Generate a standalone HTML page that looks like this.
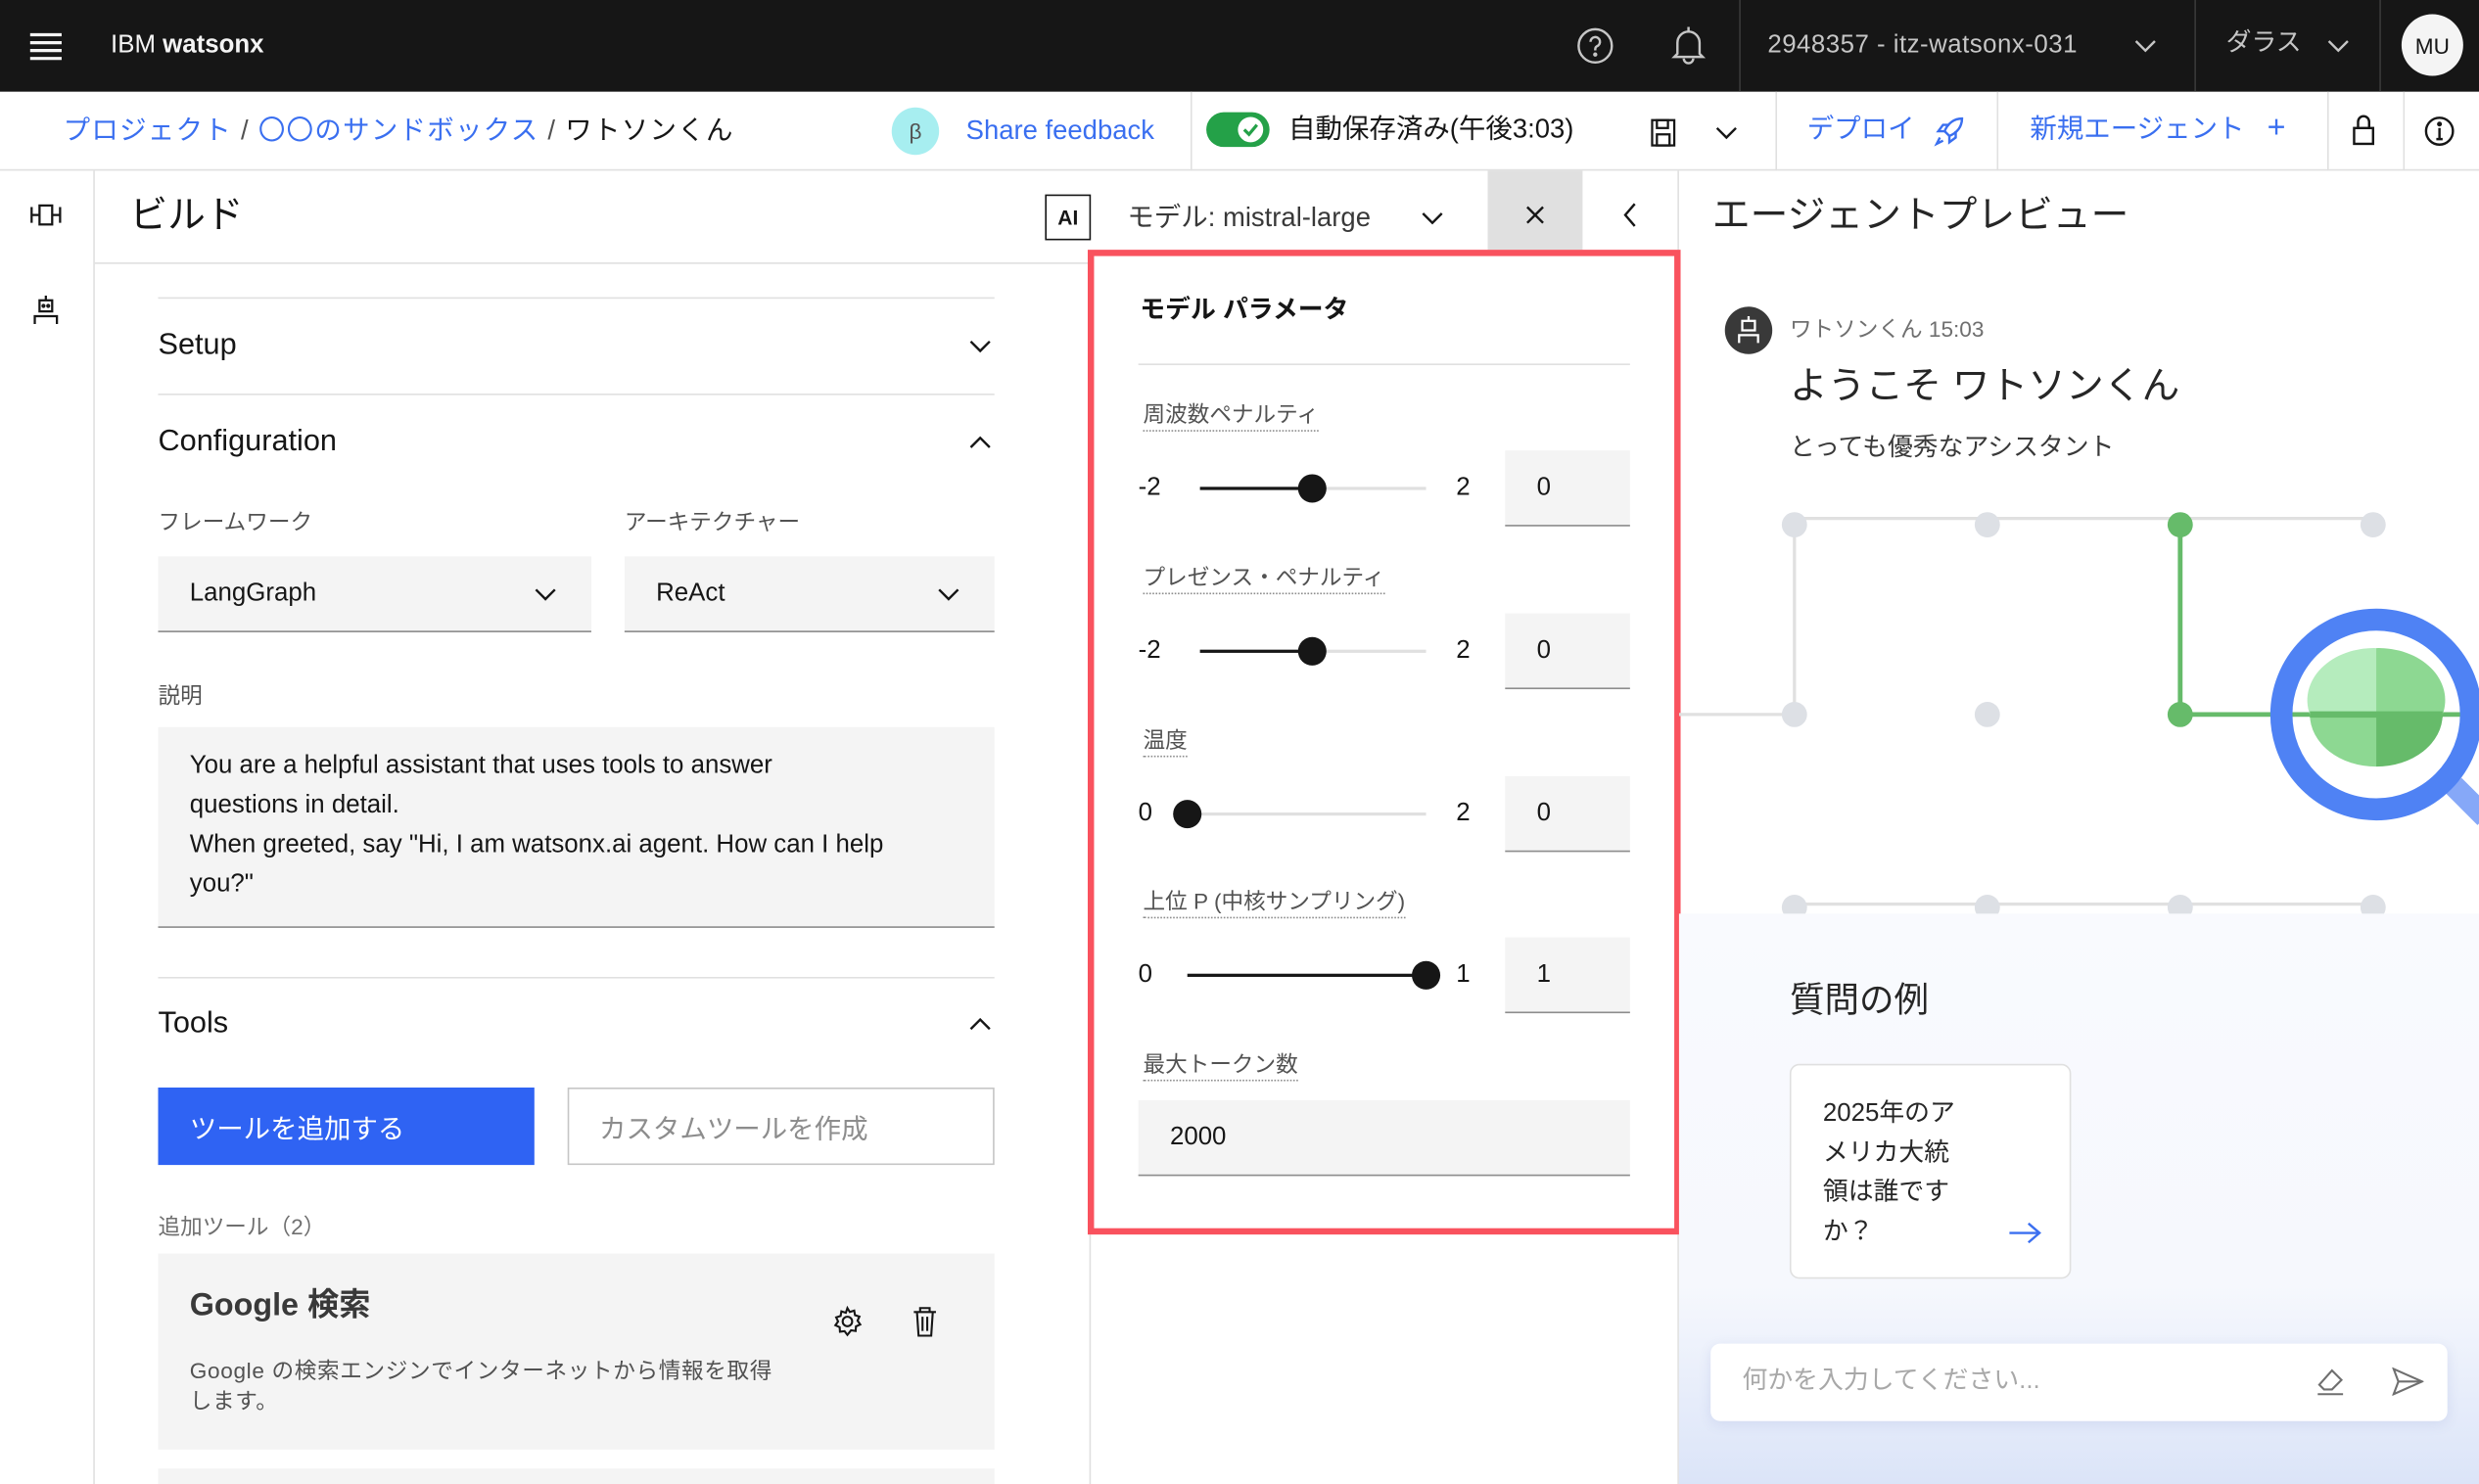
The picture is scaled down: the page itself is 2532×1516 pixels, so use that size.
<!DOCTYPE html>
<html><head><meta charset="utf-8">
<style>
*{box-sizing:border-box;margin:0;padding:0}
html,body{width:2532px;height:1516px;overflow:hidden;background:#fff}
#w{position:absolute;left:0;top:0;width:1568px;height:939px;transform:scale(1.6148);transform-origin:0 0;font-family:"Liberation Sans","Noto Sans CJK JP",sans-serif;color:#161616}
.a{position:absolute;white-space:nowrap}
.blue{color:#3a6ff0}
.sep{position:absolute;width:1px;background:#e0e0e0}
.lbl{position:absolute;font-size:14px;color:#525252;border-bottom:1px dotted #8d8d8d;line-height:20px}
.inp{position:absolute;background:#f4f4f4;border-bottom:1px solid #8d8d8d;font-size:16px;padding-left:20px;display:flex;align-items:center}
.trk{position:absolute;height:2px;background:#e0e0e0}
.fill{position:absolute;height:2px;background:#161616}
.th{position:absolute;width:18px;height:18px;border-radius:50%;background:#161616}
.num{position:absolute;font-size:16px;color:#161616}
svg{position:absolute}
</style></head><body><div id="w">
<div class="a" style="left:0;top:0;width:1568px;height:58px;background:#161616"></div>
<svg style="left:19px;top:20px" width="20" height="18"><g stroke="#f4f4f4" stroke-width="2"><line x1="0" y1="2" x2="20" y2="2"/><line x1="0" y1="7" x2="20" y2="7"/><line x1="0" y1="12" x2="20" y2="12"/><line x1="0" y1="17" x2="20" y2="17"/></g></svg>
<div class="a" style="left:70px;top:18px;font-size:16px;color:#f4f4f4;line-height:22px">IBM <b style="font-weight:600">watsonx</b></div>
<svg style="left:997px;top:17px" width="24" height="24" fill="none" stroke="#c6c6c6" stroke-width="1.5"><circle cx="12" cy="12" r="10.5"/><path d="M9 9.5a3 3 0 1 1 4 2.8c-.8.4-1 1-1 2v.6"/><circle cx="12" cy="17.5" r=".6" fill="#c6c6c6"/></svg>
<svg style="left:1057px;top:16px" width="22" height="26" fill="none" stroke="#c6c6c6" stroke-width="1.5"><path d="M4 18V11a7 7 0 0 1 14 0v7l2 2H2z"/><path d="M8 21a3 3 0 0 0 6 0"/><line x1="11" y1="1" x2="11" y2="4"/></svg>
<div class="sep" style="left:1100px;top:0;height:58px;background:#393939"></div>
<div class="a" style="left:1118px;top:18px;font-size:16px;color:#c6c6c6;line-height:22px;letter-spacing:.3px">2948357 - itz-watsonx-031</div>
<svg style="left:1350px;top:24px" width="14" height="10" fill="none" stroke="#c6c6c6" stroke-width="1.5"><path d="M1 2l6 6 6-6"/></svg>
<div class="sep" style="left:1388px;top:0;height:58px;background:#393939"></div>
<div class="a" style="left:1408px;top:17px;font-size:16px;color:#c6c6c6;line-height:22px">ダラス</div>
<svg style="left:1472px;top:24px" width="14" height="10" fill="none" stroke="#c6c6c6" stroke-width="1.5"><path d="M1 2l6 6 6-6"/></svg>
<div class="sep" style="left:1505px;top:0;height:58px;background:#393939"></div>
<div class="a" style="left:1519px;top:9px;width:39px;height:39px;border-radius:50%;background:#f4f4f4;font-size:14px;color:#161616;display:flex;align-items:center;justify-content:center">MU</div>
<div class="a" style="left:0;top:107px;width:1568px;height:1px;background:#e0e0e0"></div>
<div class="a" style="left:40px;top:71px;font-size:17px;line-height:24px;letter-spacing:.8px"><span class="blue">プロジェクト</span> <span style="color:#525252"> / </span> <span class="blue">〇〇のサンドボックス</span> <span style="color:#525252"> / </span> ワトソンくん</div>
<div class="a" style="left:564px;top:68px;width:30px;height:30px;border-radius:50%;background:#a7eef0;color:#525252;font-size:14px;display:flex;align-items:center;justify-content:center">β</div>
<div class="a blue" style="left:611px;top:71px;font-size:17px;line-height:24px">Share feedback</div>
<div class="sep" style="left:753px;top:58px;height:50px"></div>
<div class="a" style="left:763px;top:71px;width:40px;height:22px;border-radius:11px;background:#24a148"></div>
<div class="a" style="left:783px;top:74px;width:16px;height:16px;border-radius:50%;background:#fff"></div>
<svg style="left:785px;top:76px" width="12" height="12" fill="none" stroke="#24a148" stroke-width="2"><path d="M2 6l3 3 5-6"/></svg>
<div class="a" style="left:815px;top:70px;font-size:17px;line-height:24px">自動保存済み(午後3:03)</div>
<svg style="left:1044px;top:75px" width="16" height="18" fill="none" stroke="#161616" stroke-width="1.4"><rect x="1" y="1" width="14" height="16"/><rect x="4" y="1" width="7" height="5"/><rect x="4" y="10" width="8" height="7"/></svg>
<svg style="left:1085px;top:79px" width="14" height="10" fill="none" stroke="#161616" stroke-width="1.5"><path d="M1 2l6 6 6-6"/></svg>
<div class="sep" style="left:1123px;top:58px;height:50px"></div>
<div class="a blue" style="left:1143px;top:70px;font-size:17px;line-height:24px">デプロイ</div>
<svg style="left:1222px;top:72px" width="22" height="22" fill="none" stroke="#3a6ff0" stroke-width="1.5"><path d="M19 3c-5 0-9 3-11 8l3 3c5-2 8-6 8-11z"/><path d="M8 11l-4 0 3-4 4 0M11 14v4l4-3v-4"/><path d="M5 15l-2 4 4-2"/></svg>
<div class="sep" style="left:1263px;top:58px;height:50px"></div>
<div class="a blue" style="left:1284px;top:70px;font-size:17px;line-height:24px">新規エージェント</div>
<div class="a blue" style="left:1434px;top:68px;font-size:20px;line-height:26px">+</div>
<div class="sep" style="left:1472px;top:58px;height:50px"></div>
<svg style="left:1488px;top:72px" width="14" height="20" fill="none" stroke="#161616" stroke-width="1.5"><rect x="1" y="9" width="12" height="10"/><path d="M3.5 9V5a3.5 3.5 0 0 1 7 0v4"/></svg>
<div class="sep" style="left:1520px;top:58px;height:50px"></div>
<svg style="left:1533px;top:73px" width="20" height="20" fill="none" stroke="#161616" stroke-width="1.5"><circle cx="10" cy="10" r="8.5"/><line x1="10" y1="8" x2="10" y2="15"/><line x1="8" y1="15" x2="12" y2="15"/><circle cx="10" cy="5.5" r=".8" fill="#161616"/></svg>
<div class="a" style="left:59px;top:108px;width:1px;height:831px;background:#e0e0e0"></div>
<svg style="left:18px;top:129px" width="22" height="14" fill="none" stroke="#161616" stroke-width="1.4"><rect x="7" y="1" width="8" height="12"/><path d="M2 2v10M20 2v10M2 7h5M15 7h5"/></svg>
<svg style="left:20px;top:186px" width="18" height="20" fill="none" stroke="#161616" stroke-width="1.4"><rect x="5" y="4" width="8" height="7"/><path d="M9 1v3M2 19v-5h14v5"/><circle cx="7.5" cy="7.5" r=".6"/><circle cx="10.5" cy="7.5" r=".6"/></svg>
<div class="a" style="left:60px;top:166px;width:1002px;height:1px;background:#e0e0e0"></div>
<div class="a" style="left:82px;top:122px;font-size:24px;line-height:30px">ビルド</div>
<div class="a" style="left:661px;top:123px;width:29px;height:29px;border:1.5px solid #161616;font-size:13px;font-weight:bold;display:flex;align-items:center;justify-content:center">AI</div>
<div class="a" style="left:713px;top:126px;font-size:17px;line-height:24px;color:#393939">モデル: mistral-large</div>
<svg style="left:899px;top:133px" width="14" height="10" fill="none" stroke="#161616" stroke-width="1.5"><path d="M1 2l6 6 6-6"/></svg>
<div class="a" style="left:941px;top:108px;width:60px;height:57px;background:#e0e0e0"></div>
<svg style="left:965px;top:130px" width="12" height="12" stroke="#161616" stroke-width="1.5"><path d="M1 1l10 10M11 1L1 11"/></svg>
<svg style="left:1026px;top:128px" width="10" height="16" fill="none" stroke="#161616" stroke-width="1.5"><path d="M8 1L2 8l6 7"/></svg>
<div class="a" style="left:100px;top:188px;width:529px;height:1px;background:#e0e0e0"></div>
<div class="a" style="left:100px;top:207px;font-size:19px;line-height:24px">Setup</div>
<svg style="left:613px;top:214px" width="14" height="10" fill="none" stroke="#161616" stroke-width="1.5"><path d="M1 2l6 6 6-6"/></svg>
<div class="a" style="left:100px;top:249px;width:529px;height:1px;background:#e0e0e0"></div>
<div class="a" style="left:100px;top:268px;font-size:19px;line-height:24px">Configuration</div>
<svg style="left:613px;top:275px" width="14" height="10" fill="none" stroke="#161616" stroke-width="1.5"><path d="M1 8l6-6 6 6"/></svg>
<div class="a" style="left:100px;top:320px;font-size:14px;color:#525252">フレームワーク</div>
<div class="a" style="left:395px;top:320px;font-size:14px;color:#525252">アーキテクチャー</div>
<div class="inp" style="left:100px;top:352px;width:274px;height:48px">LangGraph</div>
<svg style="left:338px;top:371px" width="14" height="10" fill="none" stroke="#161616" stroke-width="1.5"><path d="M1 2l6 6 6-6"/></svg>
<div class="inp" style="left:395px;top:352px;width:234px;height:48px">ReAct</div>
<svg style="left:593px;top:371px" width="14" height="10" fill="none" stroke="#161616" stroke-width="1.5"><path d="M1 2l6 6 6-6"/></svg>
<div class="a" style="left:100px;top:430px;font-size:14px;color:#525252">説明</div>
<div class="a" style="left:100px;top:460px;width:529px;height:127px;background:#f4f4f4;border-bottom:1px solid #8d8d8d;padding:12px 20px;font-size:16px;line-height:25px;white-space:normal;color:#161616"><div style="width:492px">You are a helpful assistant that uses tools to answer<br>questions in detail.<br>When greeted, say "Hi, I am watsonx.ai agent. How can I help<br>you?"</div></div>
<div class="a" style="left:100px;top:618px;width:529px;height:1px;background:#e0e0e0"></div>
<div class="a" style="left:100px;top:636px;font-size:19px;line-height:24px">Tools</div>
<svg style="left:613px;top:643px" width="14" height="10" fill="none" stroke="#161616" stroke-width="1.5"><path d="M1 8l6-6 6 6"/></svg>
<div class="a" style="left:100px;top:688px;width:238px;height:49px;background:#2f63f3;color:#fff;font-size:17px;padding-left:20px;display:flex;align-items:center">ツールを追加する</div>
<div class="a" style="left:359px;top:688px;width:270px;height:49px;border:1px solid #c6c6c6;color:#8d8d8d;font-size:17px;padding-left:19px;display:flex;align-items:center">カスタムツールを作成</div>
<div class="a" style="left:100px;top:766px;font-size:14px;color:#6f6f6f">追加ツール（2）</div>
<div class="a" style="left:100px;top:793px;width:529px;height:124px;background:#f4f4f4"></div>
<div class="a" style="left:120px;top:813px;font-size:20px;font-weight:bold;color:#393939;line-height:26px">Google 検索</div>
<svg style="left:526px;top:826px" width="20" height="20" fill="none" stroke="#161616" stroke-width="1.3"><circle cx="10" cy="10" r="3"/><path d="M10 1.5l1.5 2.5 2.8-.9.5 2.9 2.8.9-1.2 2.6 1.7 2.4-2.7 1.2-.2 2.9-2.9-.4L10 18.5l-1.8-2.4-2.9.4-.2-2.9-2.7-1.2 1.7-2.4L2.9 7.4l2.8-.9.5-2.9 2.8.9z"/></svg>
<svg style="left:577px;top:826px" width="16" height="20" fill="none" stroke="#161616" stroke-width="1.3"><path d="M1 4h14M5 4V1.5h6V4M3 4l1 15h8l1-15M6.5 7v9M9.5 7v9"/></svg>
<div class="a" style="left:120px;top:858px;font-size:14px;line-height:19px;color:#525252;letter-spacing:.4px">Google の検索エンジンでインターネットから情報を取得<br>します。</div>
<div class="a" style="left:100px;top:929px;width:529px;height:10px;background:#f4f4f4"></div>
<div class="a" style="left:689px;top:167px;width:1px;height:772px;background:#e0e0e0"></div>
<div class="a" style="left:1061px;top:108px;width:1px;height:831px;background:#e0e0e0"></div>
<div class="a" style="left:688px;top:158px;width:375px;height:623px;border:4px solid #f9525e;background:#fff"></div>
<div class="a" style="left:721px;top:186px;font-size:16px;font-weight:bold;line-height:22px">モデル パラメータ</div>
<div class="a" style="left:720px;top:230px;width:311px;height:1px;background:#e0e0e0"></div>
<div class="lbl" style="left:723px;top:252px">周波数ペナルティ</div>
<div class="num" style="left:720px;top:300px">-2</div>
<div class="trk" style="left:759px;top:308px;width:143px"></div><div class="fill" style="left:759px;top:308px;width:71px"></div><div class="th" style="left:821px;top:300px"></div>
<div class="num" style="left:921px;top:300px">2</div>
<div class="inp" style="left:952px;top:285px;width:79px;height:48px">0</div>
<div class="lbl" style="left:723px;top:355px">プレゼンス・ペナルティ</div>
<div class="num" style="left:720px;top:403px">-2</div>
<div class="trk" style="left:759px;top:411px;width:143px"></div><div class="fill" style="left:759px;top:411px;width:71px"></div><div class="th" style="left:821px;top:403px"></div>
<div class="num" style="left:921px;top:403px">2</div>
<div class="inp" style="left:952px;top:388px;width:79px;height:48px">0</div>
<div class="lbl" style="left:723px;top:458px">温度</div>
<div class="num" style="left:720px;top:506px">0</div>
<div class="trk" style="left:751px;top:514px;width:151px"></div><div class="th" style="left:742px;top:506px"></div>
<div class="num" style="left:921px;top:506px">2</div>
<div class="inp" style="left:952px;top:491px;width:79px;height:48px">0</div>
<div class="lbl" style="left:723px;top:560px">上位 P (中核サンプリング)</div>
<div class="num" style="left:720px;top:608px">0</div>
<div class="fill" style="left:751px;top:616px;width:151px"></div><div class="th" style="left:893px;top:608px"></div>
<div class="num" style="left:921px;top:608px">1</div>
<div class="inp" style="left:952px;top:593px;width:79px;height:48px">1</div>
<div class="lbl" style="left:723px;top:663px">最大トークン数</div>
<div class="inp" style="left:720px;top:696px;width:311px;height:48px">2000</div>
<div class="a" style="left:1083px;top:122px;font-size:24px;line-height:30px;color:#262626">エージェントプレビュー</div>
<div class="a" style="left:1091px;top:194px;width:30px;height:30px;border-radius:50%;background:#393939"></div>
<svg style="left:1097px;top:199px" width="18" height="20" fill="none" stroke="#fff" stroke-width="1.4"><rect x="5" y="4" width="8" height="6"/><path d="M9 1v3M3 18v-5h12v5"/></svg>
<div class="a" style="left:1132px;top:198px;font-size:14px;color:#6f6f6f;line-height:20px">ワトソンくん 15:03</div>
<div class="a" style="left:1132px;top:229px;font-size:24px;line-height:32px;color:#262626">ようこそ ワトソンくん</div>
<div class="a" style="left:1132px;top:273px;font-size:16px;line-height:22px;color:#393939">とっても優秀なアシスタント</div>
<svg style="left:1062px;top:322px" width="506" height="258">
<g stroke="#e0e0e0" stroke-width="2" fill="none"><line x1="73" y1="6" x2="440" y2="6"/><line x1="73" y1="250" x2="440" y2="250"/><line x1="73" y1="10" x2="73" y2="130"/><line x1="0" y1="130" x2="73" y2="130"/></g>
<g fill="#dde0e5"><circle cx="73" cy="10" r="8"/><circle cx="195" cy="10" r="8"/><circle cx="439" cy="10" r="8"/><circle cx="73" cy="130" r="8"/><circle cx="195" cy="130" r="8"/><circle cx="73" cy="252" r="8"/><circle cx="195" cy="252" r="8"/><circle cx="317" cy="252" r="8"/><circle cx="439" cy="252" r="8"/></g>
<g stroke="#66bb6a" stroke-width="3" fill="none"><line x1="317" y1="10" x2="317" y2="130"/><line x1="317" y1="130" x2="506" y2="130"/></g>
<g fill="#66bb6a"><circle cx="317" cy="10" r="8"/><circle cx="317" cy="130" r="8"/></g>
<line x1="490" y1="175" x2="510" y2="195" stroke="#86a8f8" stroke-width="14"/>
<circle cx="441" cy="130" r="60" fill="none" stroke="#4f82f4" stroke-width="14"/>
<path d="M441 130V88a42 33 0 0 0-42 42z" fill="#b5ecbd"/><path d="M441 130V88a42 33 0 0 1 42 42z" fill="#8dd892"/><path d="M441 130H399a42 33 0 0 0 42 33z" fill="#8dd892"/><path d="M441 130H483a42 33 0 0 1-42 33z" fill="#66bb6a"/>
<line x1="399" y1="130" x2="483" y2="130" stroke="#66bb6a" stroke-width="4"/>
</svg>
<div class="a" style="left:1062px;top:578px;width:506px;height:361px;background:linear-gradient(#f9fafe 0%,#f6f8fd 65%,#dbe4f8 100%)"></div>
<div class="a" style="left:1132px;top:618px;font-size:22px;line-height:30px;color:#262626">質問の例</div>
<div class="a" style="left:1132px;top:673px;width:178px;height:136px;background:#fff;border:1px solid #e0e0e0;border-radius:6px;padding:18px 20px;font-size:16px;line-height:25px;color:#262626">2025年のア<br>メリカ大統<br>領は誰です<br>か？</div>
<svg style="left:1270px;top:772px" width="22" height="16" fill="none" stroke="#3a6ff0" stroke-width="1.5"><path d="M1 8h19M13 2l7 6-7 6"/></svg>
<div class="a" style="left:1082px;top:850px;width:466px;height:49px;background:#fff;border-radius:6px;box-shadow:0 2px 8px rgba(80,100,180,.12)"></div>
<div class="a" style="left:1102px;top:862px;font-size:16px;color:#a8a8a8;line-height:24px">何かを入力してください...</div>
<svg style="left:1464px;top:864px" width="20" height="20" fill="none" stroke="#6f6f6f" stroke-width="1.3"><path d="M3 12l8-9 6 6-6 6H6z"/><line x1="2" y1="18" x2="18" y2="18"/></svg>
<svg style="left:1513px;top:865px" width="20" height="18" fill="none" stroke="#6f6f6f" stroke-width="1.3"><path d="M1 1l18 8-18 8 3-8z"/><line x1="4" y1="9" x2="19" y2="9"/></svg>
</div></body></html>
